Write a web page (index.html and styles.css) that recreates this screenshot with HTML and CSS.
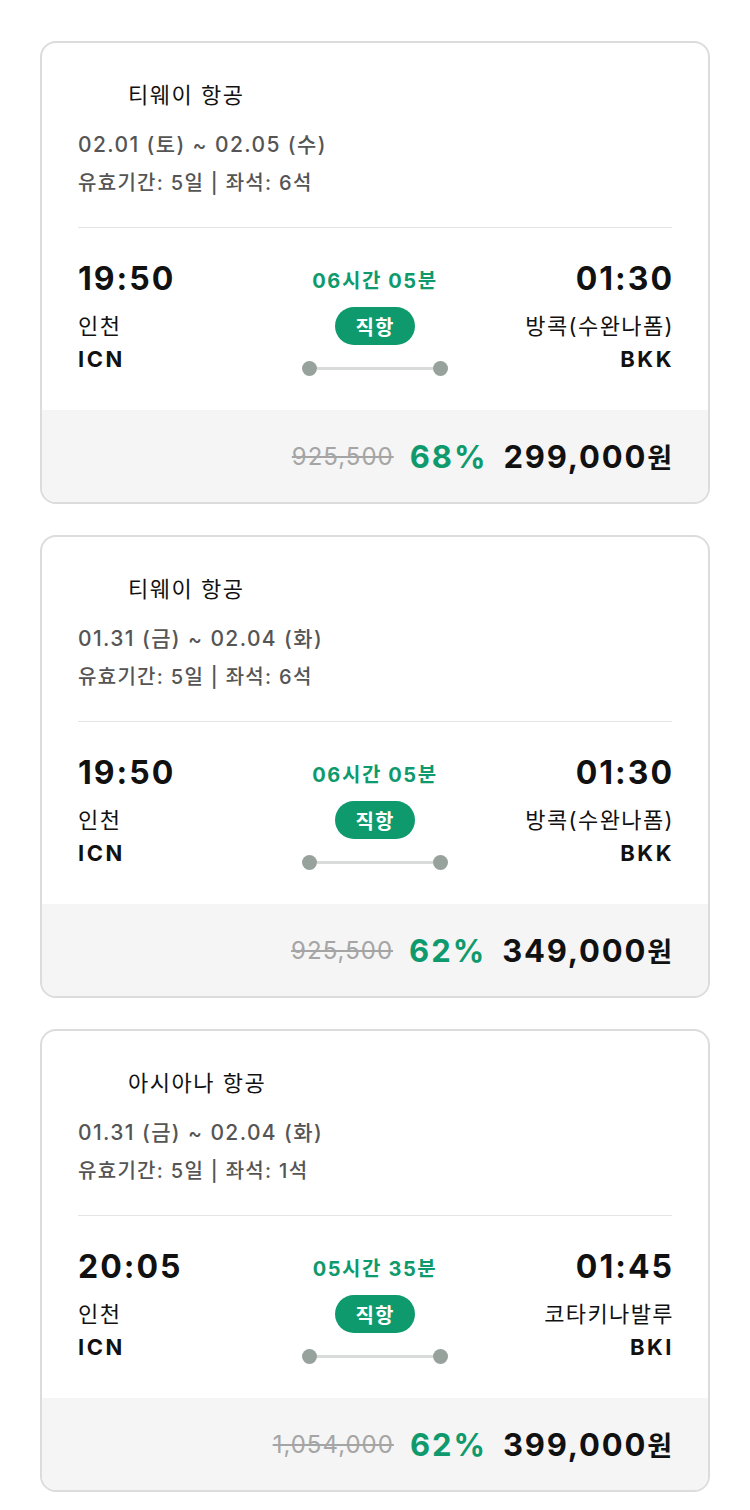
FILE: index.html
```html
<!DOCTYPE html>
<html lang="ko">
<head>
<meta charset="utf-8">
<link rel="stylesheet" href="styles.css">
</head>
<body>
<div class="list">
  <div class="card">
    <div class="head">
      <div class="airline"><span class="logo"></span>티웨이 항공</div>
      <div class="date">02.01 (토) ~ 02.05 (수)</div>
      <div class="info">유효기간: 5일 | 좌석: 6석</div>
    </div>
    <div class="flight">
      <div class="side">
        <div class="time">19:50</div>
        <div class="city">인천</div>
        <div class="code">ICN</div>
      </div>
      <div class="mid">
        <div class="dur">06시간 05분</div>
        <div class="badge">직항</div>
        <div class="track"><span class="dot"></span><span class="bar"></span><span class="dot"></span></div>
      </div>
      <div class="side right">
        <div class="time">01:30</div>
        <div class="city">방콕(수완나폼)</div>
        <div class="code">BKK</div>
      </div>
    </div>
    <div class="price">
      <span class="old">925,500</span>
      <span class="pct">68%</span>
      <span class="now">299,000<small>원</small></span>
    </div>
  </div>

  <div class="card">
    <div class="head">
      <div class="airline"><span class="logo"></span>티웨이 항공</div>
      <div class="date">01.31 (금) ~ 02.04 (화)</div>
      <div class="info">유효기간: 5일 | 좌석: 6석</div>
    </div>
    <div class="flight">
      <div class="side">
        <div class="time">19:50</div>
        <div class="city">인천</div>
        <div class="code">ICN</div>
      </div>
      <div class="mid">
        <div class="dur">06시간 05분</div>
        <div class="badge">직항</div>
        <div class="track"><span class="dot"></span><span class="bar"></span><span class="dot"></span></div>
      </div>
      <div class="side right">
        <div class="time">01:30</div>
        <div class="city">방콕(수완나폼)</div>
        <div class="code">BKK</div>
      </div>
    </div>
    <div class="price">
      <span class="old">925,500</span>
      <span class="pct">62%</span>
      <span class="now">349,000<small>원</small></span>
    </div>
  </div>

  <div class="card">
    <div class="head">
      <div class="airline"><span class="logo"></span>아시아나 항공</div>
      <div class="date">01.31 (금) ~ 02.04 (화)</div>
      <div class="info">유효기간: 5일 | 좌석: 1석</div>
    </div>
    <div class="flight">
      <div class="side">
        <div class="time">20:05</div>
        <div class="city">인천</div>
        <div class="code">ICN</div>
      </div>
      <div class="mid">
        <div class="dur">05시간 35분</div>
        <div class="badge">직항</div>
        <div class="track"><span class="dot"></span><span class="bar"></span><span class="dot"></span></div>
      </div>
      <div class="side right">
        <div class="time">01:45</div>
        <div class="city">코타키나발루</div>
        <div class="code">BKI</div>
      </div>
    </div>
    <div class="price">
      <span class="old">1,054,000</span>
      <span class="pct">62%</span>
      <span class="now">399,000<small>원</small></span>
    </div>
  </div>
</div>
</body>
</html>
```

FILE: styles.css
```css
* { box-sizing: border-box; }
html, body { margin: 0; padding: 0; background: #fff; }
body {
  font-family: Inter, "Noto Sans CJK KR", sans-serif;
  color: #111;
}
.list {
  padding: 41px 40px 0 40px;
  display: flex;
  flex-direction: column;
  gap: 31px;
}
.card {
  border: 2px solid #dcdcdc;
  border-radius: 16px;
  overflow: hidden;
  background: #fff;
}
.head {
  margin: 0 36px;
  padding: 35px 0 27px;
  border-bottom: 1.5px solid #e4e4e4;
}
.airline {
  display: flex;
  align-items: center;
  font-size: 22px;
  line-height: 34px;
  font-weight: 400;
  letter-spacing: 1.5px;
  color: #111;
}
.logo {
  width: 40px;
  height: 34px;
  margin-right: 10px;
}
.date {
  margin-top: 16px;
  font-size: 21px;
  line-height: 34px;
  font-weight: 500;
  letter-spacing: 1.4px;
  color: #555;
}
.info {
  margin-top: 4px;
  font-size: 20px;
  line-height: 34px;
  font-weight: 500;
  letter-spacing: 1.3px;
  color: #555;
}
.flight {
  margin: 0 36px;
  padding: 31px 0 34px;
  display: grid;
  grid-template-columns: 1fr auto 1fr;
  align-items: start;
}
.side { display: flex; flex-direction: column; align-items: flex-start; }
.side.right { align-items: flex-end; }
.time {
  font-size: 32px;
  line-height: 40px;
  font-weight: 700;
  letter-spacing: 2px;
  color: #111;
}
.side.right .time, .side.right .city, .side.right .code { margin-right: -2px; }
.city {
  margin-top: 12px;
  font-size: 22px;
  line-height: 30px;
  letter-spacing: 1.4px;
  color: #111;
}
.code {
  margin-top: 3px;
  font-size: 22px;
  line-height: 30px;
  font-weight: 700;
  letter-spacing: 2.5px;
  color: #111;
}
.mid {
  display: flex;
  flex-direction: column;
  align-items: center;
  padding-top: 2px;
}
.dur {
  font-size: 20px;
  line-height: 40px;
  font-weight: 700;
  letter-spacing: 1.6px;
  color: #0e9a6c;
}
.badge {
  margin-top: 6px;
  width: 80px;
  height: 38px;
  border-radius: 19px;
  background: #0e9a6c;
  color: #fff;
  font-size: 20px;
  font-weight: 600;
  letter-spacing: 1px;
  display: flex;
  align-items: center;
  justify-content: center;
}
.track {
  margin-top: 16px;
  display: flex;
  align-items: center;
  width: 146px;
}
.dot {
  width: 15px;
  height: 15px;
  border-radius: 50%;
  background: #97a29d;
  flex: none;
}
.bar {
  flex: 1;
  height: 3px;
  background: #d8dbd9;
}
.price {
  background: #f5f5f5;
  height: 92px;
  padding: 0 36px;
  display: flex;
  align-items: center;
  justify-content: flex-end;
  gap: 16px;
}
.old {
  font-size: 24px;
  letter-spacing: 1px;
  color: #a5a5a5;
  text-decoration: line-through;
}
.pct {
  font-size: 31px;
  font-weight: 700;
  letter-spacing: 2px;
  color: #0e9a6c;
}
.now {
  font-size: 31px;
  font-weight: 700;
  letter-spacing: 1.8px;
  color: #111;
}
.now small {
  font-size: 27px;
  font-weight: 700;
  letter-spacing: 0;
}
```
